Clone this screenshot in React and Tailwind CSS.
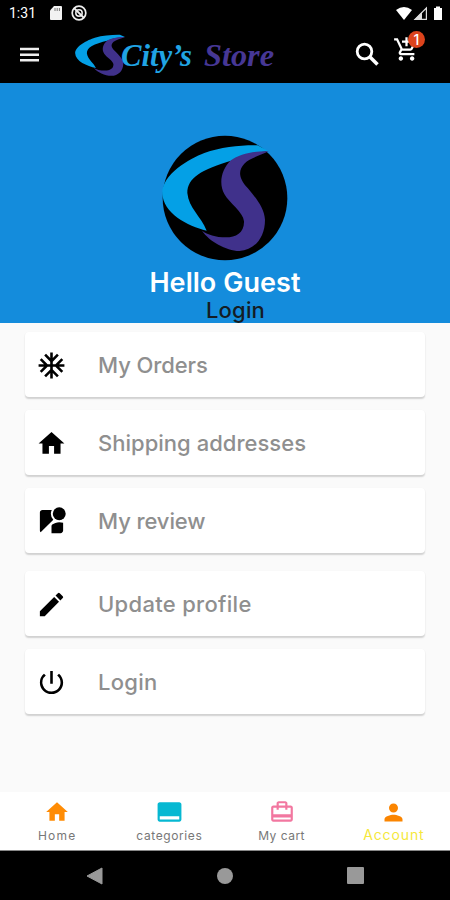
import React from "react";
import {
  MdAcUnit,
  MdHome,
  MdStreetview,
  MdEdit,
  MdPowerSettingsNew,
  MdCallToAction,
  MdCardTravel,
  MdPerson,
  MdAddShoppingCart,
} from "react-icons/md";

function LogoMark() {
  return (
    <g>
      <path
        fill="#04a0e6"
        d="M418 80L385 62C335 61 275 67 225 85C180 102 98 150 99 205C100 265 175 305 232 318C215 275 178 250 174 205C174 160 215 135 310 107C340 90 380 84 418 80Z"
      />
      <path
        fill="#40318b"
        d="M418 80C380 78 330 88 305 107C275 135 268 178 285 208C300 235 342 262 344 290C345 325 320 338 290 338C258 338 235 330 218 318C240 350 290 378 330 379C375 376 407 340 407 285C405 250 380 220 355 190C325 158 328 135 345 117C362 100 390 94 418 80Z"
      />
    </g>
  );
}

function StatusBar() {
  return (
    <div className="flex h-[26px] items-center justify-between pl-[9px] pr-[7px] text-white">
      <div className="flex items-center">
        <span className="w-[41px] font-['Roboto',sans-serif] text-[14px] leading-none">1:31</span>
        <svg className="h-[14px] w-[12px]" viewBox="0 0 12 14">
          <path fill="#f2f2f2" d="M4 0H11Q12 0 12 1V13Q12 14 11 14H1Q0 14 0 13V4.500Z" />
          <path stroke="#777" d="M5 2V5M7.200 2V5M9.400 2V5" />
        </svg>
        <svg className="ml-[9px] size-4" viewBox="0 0 16 16" fill="none" stroke="#eee">
          <circle cx="8" cy="8" r="6.800" strokeWidth="1.700" />
          <circle cx="8" cy="8" r="3.200" strokeWidth="1.500" />
          <path d="M3 3L13 13" strokeWidth="1.800" />
        </svg>
      </div>
      <svg className="h-[15px] w-[47px]" viewBox="0 0 47 15">
        <path fill="#fff" d="M0 4Q8 -2 16 4L8 14Z" />
        <path fill="none" stroke="#ddd" strokeWidth="1.200" d="M19 13.400H30.400V2Z" />
        <path fill="#ddd" d="M18 14L26 6V14Z" />
        <path fill="#fff" d="M40 0.500H44V2H46V14H38V2H40Z" />
      </svg>
    </div>
  );
}

function AppBar() {
  return (
    <div className="flex h-[57px] items-start text-white">
      <svg className="ml-[20px] mt-[21px] h-[15px] w-[19px]" viewBox="0 0 19 15">
        <path stroke="#eee" strokeWidth="2.600" d="M0 2H19M0 7.700H19M0 13.300H19" />
      </svg>
      <svg className="ml-[36px] mt-[8px] h-[42px] w-[50px]" viewBox="98 57 320 323" preserveAspectRatio="none">
        <LogoMark />
      </svg>
      <svg
        className="-ml-[7px] mt-[8px] h-[46px] w-[160px] font-['Liberation_Serif',serif] text-[32px] font-bold italic"
        viewBox="0 0 160 46"
      >
        <text x="3" y="32" textLength="71" lengthAdjust="spacingAndGlyphs" fill="#20a4e4">City’s</text>
        <text x="86" y="32" textLength="70" lengthAdjust="spacingAndGlyphs" fill="#463795">Store</text>
      </svg>
      <svg className="ml-[77px] mt-[16px] size-[25px]" viewBox="0 0 25 25" fill="none" stroke="#fff">
        <circle cx="9.500" cy="9.500" r="7.300" strokeWidth="2.800" />
        <path d="M14.500 14.500L22.500 22.500" strokeWidth="3.500" />
      </svg>
      <div className="relative ml-[13px] mt-[10px]">
        <MdAddShoppingCart className="size-[27px]" />
        <span className="absolute -top-[5px] left-[15px] flex size-[17px] items-center justify-center rounded-full bg-[#dc431c] font-['Inter',sans-serif] text-[14px] font-medium leading-none">
          1
        </span>
      </div>
    </div>
  );
}

function Profile() {
  return (
    <div className="flex h-[240px] flex-col items-center bg-[#148cdc] pt-[52px] font-['Inter',sans-serif]">
      <svg className="h-[126px] w-[126px] shrink-0" viewBox="98 31 378 378">
        <circle cx="287" cy="220" r="187" fill="#000" />
        <LogoMark />
      </svg>
      <div className="mt-[7px] whitespace-nowrap text-[27px] font-semibold leading-[30px] tracking-[0.050px] text-white">
        Hello Guest
      </div>
      <div className="ml-[21px] whitespace-nowrap text-[22px] font-medium leading-[24px] tracking-[0.2px] text-[#141c24]">
        Login
      </div>
    </div>
  );
}

const items = [
  { label: "My Orders", Icon: MdAcUnit, gap: "mt-[9px]", track: "tracking-[-0.1px]" },
  { label: "Shipping addresses", Icon: MdHome, gap: "mt-[13px]", track: "tracking-[0.020px]" },
  { label: "My review", Icon: MdStreetview, gap: "mt-[13px]", track: "tracking-[-0.1px]" },
  { label: "Update profile", Icon: MdEdit, gap: "mt-[18px]", track: "tracking-[0.3px]" },
  { label: "Login", Icon: MdPowerSettingsNew, gap: "mt-[13px]", track: "tracking-[0.3px]" },
];

function Menu() {
  return (
    <div className="flex h-[469px] flex-col bg-[#fafafa] px-[25px]">
      {items.map(({ label, Icon, gap, track }, i) => (
        <div
          key={i}
          className={`flex h-[65px] shrink-0 items-center rounded-[4px] bg-white pl-[11px] pt-px shadow-[0_1.5px_1.5px_rgba(0,0,0,0.16)] ${gap}`}
        >
          <Icon className="size-[31px] text-black" />
          <span
            className={`ml-[31px] whitespace-nowrap font-['Inter',sans-serif] text-[22px] font-medium text-[#8f8f8f] ${track}`}
          >
            {label}
          </span>
        </div>
      ))}
    </div>
  );
}

function BottomNav() {
  return (
    <div className="grid h-[59px] grid-cols-4 border-b border-[#888] bg-white pl-px font-['Inter',sans-serif] text-[12px] text-[#777]">
      <div className="flex flex-col items-center pt-[7px]">
        <MdHome className="size-[26px] text-[#ff8c05]" />
        <span className="mt-px leading-[20px] tracking-[1.2px]">Home</span>
      </div>
      <div className="flex flex-col items-center pt-[7px]">
        <MdCallToAction className="h-[26px] w-[29px] text-[#06b8d2]" />
        <span className="mt-px leading-[20px] tracking-[0.6px]">categories</span>
      </div>
      <div className="flex flex-col items-center pt-[7px]">
        <MdCardTravel className="size-[26px] text-[#f277a0]" />
        <span className="mt-px leading-[20px] tracking-[0.5px]">My cart</span>
      </div>
      <div className="flex flex-col items-center pt-[7px]">
        <MdPerson className="size-[27px] text-[#fb8500]" />
        <span className="-mt-px text-[14px] leading-[20px] tracking-[0.9px] text-[#f5e83b]">Account</span>
      </div>
    </div>
  );
}

function SystemNav() {
  return (
    <div className="flex h-[49px] items-center justify-between bg-black pl-[86px] pr-[86px]">
      <svg className="h-[18px] w-[17px]" viewBox="0 0 17 18">
        <path fill="#999" d="M16 1V17L1 9Z" stroke="#999" strokeLinejoin="round" />
      </svg>
      <span className="size-[16px] rounded-full bg-[#999]" />
      <span className="size-[17px] rounded-[1px] bg-[#999]" />
    </div>
  );
}

export default function App() {
  return (
    <div className="flex h-[900px] w-[450px] flex-col overflow-hidden bg-black">
      <StatusBar />
      <AppBar />
      <Profile />
      <Menu />
      <BottomNav />
      <SystemNav />
    </div>
  );
}
